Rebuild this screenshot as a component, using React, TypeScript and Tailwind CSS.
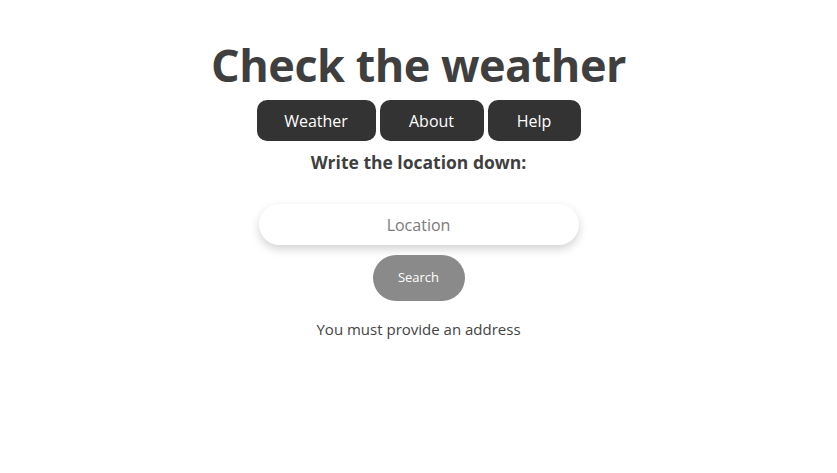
export default function App() {
  return (
    <div className="flex min-h-screen flex-col items-center bg-white pt-[36px] text-[#3f3f3f]" style={{ fontFamily: '"Open Sans", "Noto Sans", sans-serif' }}>
      <h1 className="text-[45px] font-bold leading-[58px] tracking-[-0.5px]">Check the weather</h1>
      <nav className="mt-[6px] flex gap-1">
        <button className="h-[41px] w-[119px] rounded-[10px] bg-[#333333] text-[16px] text-white" type="button">Weather</button>
        <button className="h-[41px] w-[104px] rounded-[10px] bg-[#333333] text-[16px] text-white" type="button">About</button>
        <button className="h-[41px] w-[93px] rounded-[10px] bg-[#333333] text-[16px] text-white" type="button">Help</button>
      </nav>
      <p className="mt-[8px] text-[17.5px] font-bold leading-[26px]">Write the location down:</p>
      <input
        className="mt-[29px] h-[41px] w-[320px] rounded-full bg-white text-center text-[16px] text-[#444] shadow-[0_4px_10px_rgba(0,0,0,0.18)] outline-none placeholder:text-[#7a7a7a]"
        placeholder="Location"
      />
      <button className="mt-[10px] h-[46px] w-[92px] rounded-full bg-[#8a8a8a] text-[13px] text-white" type="button">Search</button>
      <p className="mt-[17px] text-[15px] leading-[22px] text-[#444]">You must provide an address</p>
    </div>
  );
}
